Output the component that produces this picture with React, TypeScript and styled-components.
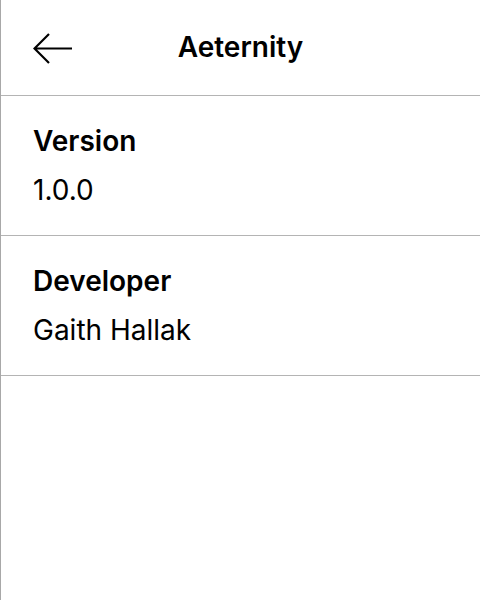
import React from "react";
import styled, { createGlobalStyle } from "styled-components";

const GlobalStyle = createGlobalStyle`
  html, body {
    margin: 0;
    padding: 0;
    background: #ffffff;
  }
  body {
    font-family: Inter, "Noto Sans", sans-serif;
    color: #000000;
  }
`;

const Page = styled.div`
  box-sizing: border-box;
  width: 480px;
  height: 600px;
  border-left: 1px solid #a8a8a8;
  background: #ffffff;
  display: flex;
  flex-direction: column;
`;

const Header = styled.header`
  box-sizing: border-box;
  height: 96px;
  border-bottom: 1px solid #b4b4b4;
  display: grid;
  grid-template-columns: 80px 1fr 80px;
  align-items: center;
`;

const BackButton = styled.button`
  background: none;
  border: none;
  padding: 0 0 0 32px;
  height: 40px;
  display: flex;
  align-items: center;
  cursor: pointer;
`;

const Title = styled.h1`
  margin: 0;
  text-align: center;
  font-size: 28px;
  font-weight: 600;
  line-height: 34px;
  padding-bottom: 1px;
`;

const Section = styled.section`
  box-sizing: border-box;
  height: 140px;
  border-bottom: 1px solid #b4b4b4;
  padding: 28px 32px 0;
  display: flex;
  flex-direction: column;
  gap: 15px;
`;

const Label = styled.div`
  font-size: 28px;
  font-weight: 600;
  line-height: 34px;
`;

const Value = styled.div`
  font-size: 28px;
  font-weight: 400;
  line-height: 34px;
`;

const BackArrow = () => (
  <svg width="40" height="32" viewBox="0 0 40 32" fill="none">
    <path
      d="M1 16.5 H39 M16 2 L1.5 16.5 L16 31"
      stroke="#000"
      strokeWidth="2.2"
      strokeLinecap="butt"
    />
  </svg>
);

const items = [
  { label: "Version", value: "1.0.0" },
  { label: "Developer", value: "Gaith Hallak" },
];

const App = () => {
  return (
    <>
      <GlobalStyle />
      <Page>
        <Header>
          <BackButton type="button" aria-label="Back">
            <BackArrow />
          </BackButton>
          <Title>Aeternity</Title>
          <div />
        </Header>
        {items.map(item => (
          <Section key={item.label}>
            <Label>{item.label}</Label>
            <Value>{item.value}</Value>
          </Section>
        ))}
      </Page>
    </>
  );
};

export default App;
